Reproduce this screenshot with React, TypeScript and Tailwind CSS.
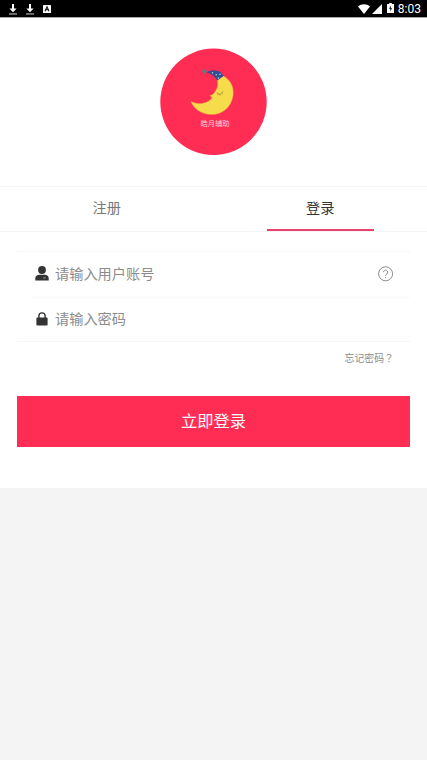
import { useState } from 'react';

type Tab = 'register' | 'login';

const TABS: { id: Tab; label: string }[] = [
  { id: 'register', label: '注册' },
  { id: 'login', label: '登录' },
];

function DownloadIcon() {
  return (
    <svg width="8" height="11" viewBox="0 0 8 11" fill="#fff" aria-hidden="true">
      <path d="M3 0h2v4.5h2.6L4 8.3.4 4.5H3z" />
      <path d="M0 9.4h8v1.1H0z" fillOpacity="0.75" />
    </svg>
  );
}

function StatusBar() {
  return (
    <div className="flex h-[18px] shrink-0 items-center justify-between border-b border-[#a8a8a8] bg-black pl-[9px] pr-[6px] text-white">
      <div className="flex items-center pt-px">
        <DownloadIcon />
        <span className="w-[9px]" />
        <DownloadIcon />
        <svg className="ml-[9px]" width="8" height="8" viewBox="0 0 8 8" aria-hidden="true">
          <rect width="8" height="8" rx="0.6" fill="#fff" />
          <path d="M2 6.3 4 1.8 6 6.3M2.8 4.8h2.4" fill="none" stroke="#111" strokeWidth="1.1" />
        </svg>
      </div>
      <div className="flex items-center">
        <svg width="12" height="10" viewBox="0 0 12 10" fill="#fff" aria-hidden="true">
          <path d="M0 2.4C3.4-.5 8.6-.5 12 2.4L6 10z" />
        </svg>
        <svg className="ml-[2px]" width="10" height="10" viewBox="0 0 10 10" fill="#fff" aria-hidden="true">
          <path d="M10 0v10H0z" />
        </svg>
        <svg className="mb-px ml-[5px]" width="7" height="10" viewBox="0 0 7 10" aria-hidden="true">
          <path d="M2.2 0h2.6v1H7v9H0V1h2.2z" fill="#fff" />
          <path d="M4 2.4 2 5.8h1.3v2.6L5 5H3.8z" fill="#111" />
        </svg>
        <span className="ml-[4px] pt-[2px] text-[12px] leading-[15px] [font-family:Roboto,sans-serif]">8:03</span>
      </div>
    </div>
  );
}

function Logo() {
  return (
    <svg width="107" height="107" viewBox="0 0 107 107" className="block" role="img" aria-label="皓月辅助">
      <circle cx="53.5" cy="53.8" r="53.2" fill="#ff2d53" />
      <path
        d="M63.2 27.8C70.5 32 74.2 39 73.1 47.5 71.6 59 62.5 66.7 51.5 66.6 41.5 66.5 33.8 60.8 30.7 53.2 35.5 56 41.5 56.4 46.2 54.2 49.5 52.6 51.3 51.3 52 49.4L49.8 47.6C52 47.2 53.6 46.2 54.8 44 57.8 40 58.3 36.5 57 31.5Z"
        fill="#f4dc4b"
        stroke="#f39a3d"
        strokeWidth="0.4"
      />
      <path
        d="M57.4 44.6C58.4 47.2 61 47 62.8 43.4M57.2 46.2l1-.5M59.8 46.4v1.1M61.8 45.2l.8.7"
        fill="none"
        stroke="#94792f"
        strokeWidth="0.7"
      />
      <path d="M46.5 24.4C50 22.2 56 21.8 60.5 24L63.9 27.8 57.3 32.6C55.5 29 52 25.8 46.5 24.4Z" fill="#344d91" />
      <g fill="#c4d6e8">
        <circle cx="52.5" cy="24.8" r="0.7" />
        <circle cx="56.2" cy="26.8" r="0.8" />
        <circle cx="60" cy="26.2" r="0.8" />
        <circle cx="58.4" cy="30" r="0.8" />
      </g>
      <circle cx="44.4" cy="23.3" r="2.1" fill="#557f87" />
      <text
        x="55"
        y="77.8"
        fill="#ffd0d5"
        fontSize="7.3"
        textAnchor="middle"
        fontFamily="'Noto Sans CJK SC', sans-serif"
      >
        皓月辅助
      </text>
    </svg>
  );
}

function UserIcon() {
  return (
    <svg width="14" height="15" viewBox="0 0 14 15" aria-hidden="true">
      <circle cx="7" cy="4" r="3.9" fill="#333" />
      <path d="M.3 14.6v-2.2C.3 10 2 8.8 4.2 8.8h5.6c2.2 0 3.9 1.2 3.9 3.6v2.2z" fill="#333" />
      <path d="M8.3 11.9h2.4" stroke="#ccc" strokeWidth="0.8" />
    </svg>
  );
}

function LockIcon() {
  return (
    <svg width="12" height="14" viewBox="0 0 12 14" aria-hidden="true">
      <rect x="0.4" y="5.4" width="11.2" height="8.2" rx="1" fill="#333" />
      <path d="M2.9 6V4a3.1 3.1 0 0 1 6.2 0v2" fill="none" stroke="#333" strokeWidth="1.4" />
    </svg>
  );
}

function HelpIcon() {
  return (
    <svg width="16" height="16" viewBox="0 0 16 16" fill="none" stroke="#8c8c8c" aria-hidden="true">
      <circle cx="7.6" cy="7.8" r="7" strokeWidth="1" />
      <path d="M5.5 6.2a2.1 2.1 0 1 1 3.4 1.7C8 8.5 7.6 8.8 7.6 9.8M7.6 11v1.1" strokeWidth="1" />
    </svg>
  );
}

export default function App() {
  const [tab, setTab] = useState<Tab>('login');
  const [account, setAccount] = useState('');
  const [password, setPassword] = useState('');

  return (
    <div className="flex min-h-screen flex-col bg-[#f4f4f4] [font-family:'Noto_Sans_CJK_SC',sans-serif]">
      <StatusBar />
      <main className="flex h-[470px] flex-col bg-white">
        <div className="flex h-[168px] shrink-0 justify-center pt-[30px]">
          <Logo />
        </div>

        <div className="flex h-[46px] shrink-0 border-y border-[#f4f4f4]" role="tablist">
          {TABS.map(({ id, label }) => (
            <button
              key={id}
              type="button"
              role="tab"
              aria-selected={tab === id}
              onClick={() => setTab(id)}
              className={`flex flex-1 flex-col items-center text-[14.2px] leading-[40px] ${
                tab === id ? 'text-[#333]' : 'text-[#777]'
              }`}
            >
              <span className="h-[42px]">{label}</span>
              <span className={`h-[2px] w-1/2 ${tab === id ? 'bg-[#e8416b]' : ''}`} />
            </button>
          ))}
        </div>

        <form className="flex flex-col px-[17px] pt-[19px]" onSubmit={(event) => event.preventDefault()}>
          <div className="border-y border-[#f6f6f6]">
            <label className="flex h-[45px] items-center pb-[2px] pl-[18px] pr-[16px]">
              <UserIcon />
              <input
                className="ml-[6px] min-w-0 flex-1 bg-transparent text-[14.2px] text-[#333] outline-none placeholder:text-[#8c8c8c]"
                type="text"
                value={account}
                onChange={(event) => setAccount(event.currentTarget.value)}
                placeholder="请输入用户账号"
              />
              <HelpIcon />
            </label>
            <label className="ml-[15px] flex h-[44px] items-center border-t border-[#f8f8f8] pb-px pl-1 pr-[16px]">
              <LockIcon />
              <input
                className="ml-[7px] min-w-0 flex-1 bg-transparent text-[14.2px] text-[#333] outline-none placeholder:text-[#8c8c8c]"
                type="password"
                value={password}
                onChange={(event) => setPassword(event.currentTarget.value)}
                placeholder="请输入密码"
              />
            </label>
          </div>
          <a href="#" className="mr-[16px] mt-[8px] h-4 self-end text-[9.9px] leading-4 text-[#8c8c8c]">
            忘记密码<span className="[font-family:'Noto_Sans_CJK_TC',sans-serif]">？</span>
          </a>
          <button type="submit" className="mt-[30px] flex h-[51px] justify-center bg-[#ff2d53] text-[16.3px] leading-[49px] text-white">
            立即登录
          </button>
        </form>
      </main>
    </div>
  );
}
